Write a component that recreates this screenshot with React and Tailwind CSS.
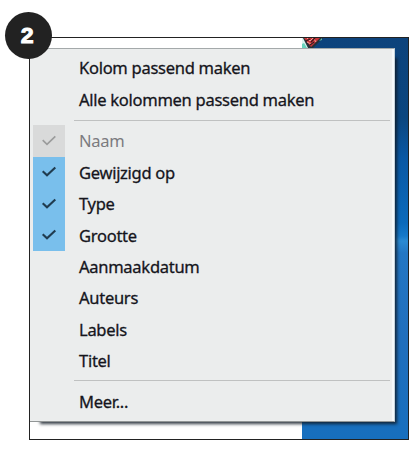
import React from "react";

const topItems = ["Kolom passend maken", "Alle kolommen passend maken"];

const columns = [
  { label: "Naam", state: "disabled" },
  { label: "Gewijzigd op", state: "checked" },
  { label: "Type", state: "checked" },
  { label: "Grootte", state: "checked" },
  { label: "Aanmaakdatum" },
  { label: "Auteurs" },
  { label: "Labels" },
  { label: "Titel" },
];

function Check({ disabled }) {
  return (
    <svg width="16" height="12" viewBox="0 0 16 12" fill="none">
      <path d="M1.7 5.2 L6 9.3 L14.3 1.4" stroke={disabled ? "#9b9c9c" : "#203c50"} strokeWidth={disabled ? 1.7 : 2.1} />
    </svg>
  );
}

function Row({ label, state }) {
  const cell = state === "checked" ? "bg-[#79bfec]" : state === "disabled" ? "bg-[#d9dada]" : "";
  return (
    <div className="flex h-[31.4px] items-center pl-[3px]">
      <div className={`flex h-full w-[32px] shrink-0 items-center justify-center ${cell}`}>
        {state && <Check disabled={state === "disabled"} />}
      </div>
      <span
        className={`ml-[14px] origin-left scale-x-[0.973] whitespace-nowrap text-[17px] leading-none tracking-[-0.3px] ${
          state === "disabled" ? "text-[#7b7b7f]" : "text-[#15151c] [-webkit-text-stroke:0.3px_#15151c]"
        }`}
      >
        {label}
      </span>
    </div>
  );
}

export default function App() {
  return (
    <div className="h-[459px] w-[419px] overflow-hidden bg-white pl-[29px] pt-[37px] font-['Noto_Sans','Open_Sans',sans-serif]">
      <div className="relative h-[403px] w-[380px] border border-[#222222]">
        <div className="flex h-full overflow-hidden">
          <div className="w-[272px] bg-white" />
          <div className="flex-1 bg-[linear-gradient(180deg,#0d437c_0px,#0b467f_80px,#0a58a4_120px,#0b6abb_185px,#1679c9_198px,#2b8bd3_203px,#2377c4_215px,#216fbd_300px,#176fbe_400px)]">
            <svg width="22" height="10" viewBox="0 0 22 10">
              <path d="M0 0H2L7 10H0Z" fill="#d9f3ee" />
              <path d="M1 0H21L16 5L11 10H6Z" fill="#263238" />
              <path d="M2 0H18L9 9Z" fill="#c93438" />
              <path d="M0 6l2-1 3 5H0Z" fill="#67d4bd" />
              <path d="M5 0l3 3 3-3M12 1l2 3M5 4l4 2 3-2" stroke="#f0a198" strokeWidth="1" fill="none" />
              <path d="M4 3l4-2M9 4l4-4M8 7l4-3" stroke="#3b171b" strokeWidth="1.2" fill="none" />
              <path d="M20 0l-3 3 3-1" fill="#58b5ad" />
            </svg>
          </div>
        </div>
        <div className="absolute left-[8px] top-[18px] h-[366px] w-[357px] shadow-[2px_2px_3px_rgba(15,25,35,0.85)]" />
        <div className="absolute left-0 top-[10px] h-[374px] w-[365px] border-b border-r border-t border-b-[#929696] border-r-[#c5d3dc] border-t-[#a4a9aa] bg-[#ebeded] pt-[3px] shadow-[inset_-3px_0_1px_-1px_#f5f9fb]">
          {topItems.map((label) => (
            <Row key={label} label={label} />
          ))}
          <div className="mb-[4.2px] ml-[44px] mr-[4px] mt-[5.2px] h-px bg-[#bfc1c1]" />
          {columns.map((item) => (
            <Row key={item.label} {...item} />
          ))}
          <div className="mb-[4.2px] ml-[44px] mr-[4px] mt-[4.2px] h-px bg-[#bfc1c1]" />
          <Row label="Meer..." />
        </div>
        <div className="absolute left-[-25px] top-[-26px] flex size-[47px] items-center justify-center rounded-full bg-[#222222]">
          <span className="translate-x-[-1px] scale-x-[1.05] font-['Liberation_Sans',sans-serif] text-[22px] font-bold leading-none text-white [-webkit-text-stroke:1px_white]">
            2
          </span>
        </div>
      </div>
    </div>
  );
}
